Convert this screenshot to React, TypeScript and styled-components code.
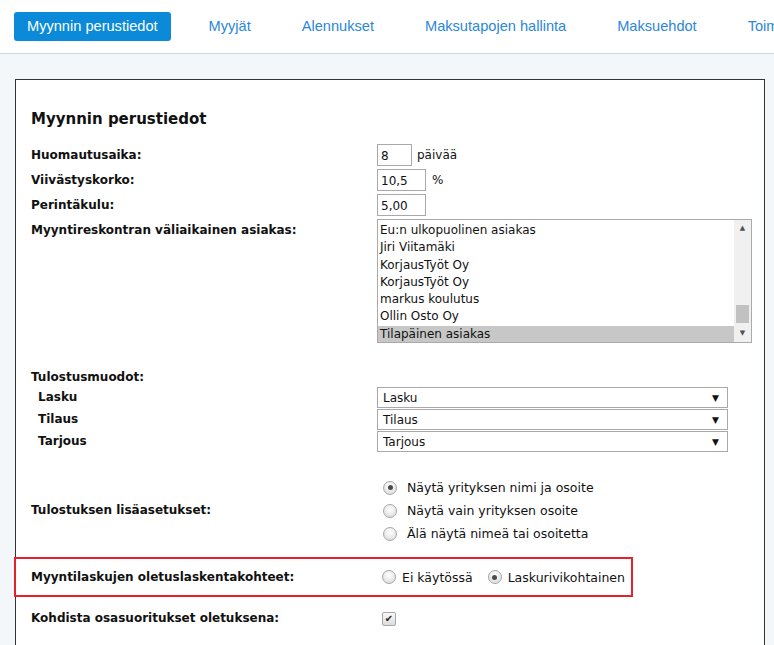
import styled, { createGlobalStyle } from 'styled-components'

const GlobalStyle = createGlobalStyle`
  html, body {
    margin: 0;
    padding: 0;
    background: #f3f7fa;
    overflow: hidden;
  }
  body {
    font-family: "DejaVu Sans", Verdana, sans-serif;
    color: #111;
  }
`

const tabs = [
  'Myynnin perustiedot',
  'Myyjät',
  'Alennukset',
  'Maksutapojen hallinta',
  'Maksuehdot',
  'Toimitustavat',
]

const customers = [
  'Eu:n ulkopuolinen asiakas',
  'Jiri Viitamäki',
  'KorjausTyöt Oy',
  'KorjausTyöt Oy',
  'markus koulutus',
  'Ollin Osto Oy',
  'Tilapäinen asiakas',
]

export default function App() {
  return (
    <>
      <GlobalStyle />
      <TabBar>
        {tabs.map((t, i) => (
          <Tab key={t} active={i === 0}>
            {t}
          </Tab>
        ))}
      </TabBar>

      <Panel>
        <Heading>Myynnin perustiedot</Heading>

        <Rows>
          <Row>
            <Label>Huomautusaika:</Label>
            <Field>
              <TextInput $w={35} readOnly value="8" />
              <Unit>päivää</Unit>
            </Field>
          </Row>
          <Row>
            <Label>Viivästyskorko:</Label>
            <Field>
              <TextInput $w={49} readOnly value="10,5" />
              <Unit $gap={6}>%</Unit>
            </Field>
          </Row>
          <Row>
            <Label>Perintäkulu:</Label>
            <Field>
              <TextInput $w={49} readOnly value="5,00" />
            </Field>
          </Row>
          <Row $top>
            <Label $pad={3}>Myyntireskontran väliaikainen asiakas:</Label>
            <ListBox>
              <Options>
                {customers.map((c, i) => (
                  <Option key={i} selected={i === customers.length - 1}>
                    {c}
                  </Option>
                ))}
              </Options>
              <ScrollBar>
                <Arrow>▲</Arrow>
                <Track>
                  <Thumb />
                </Track>
                <Arrow>▼</Arrow>
              </ScrollBar>
            </ListBox>
          </Row>
        </Rows>

        <SubTitle>Tulostusmuodot:</SubTitle>
        <SelectRows>
          {['Lasku', 'Tilaus', 'Tarjous'].map((s) => (
            <Row key={s}>
              <Label $indent>{s}</Label>
              <Select>
                <span>{s}</span>
                <Caret>▼</Caret>
              </Select>
            </Row>
          ))}
        </SelectRows>

        <RadioSection>
          <Label $pad={0}>Tulostuksen lisäasetukset:</Label>
          <RadioStack>
            <RadioLine>
              <Radio checked />
              <span>Näytä yrityksen nimi ja osoite</span>
            </RadioLine>
            <RadioLine>
              <Radio />
              <span>Näytä vain yrityksen osoite</span>
            </RadioLine>
            <RadioLine>
              <Radio />
              <span>Älä näytä nimeä tai osoitetta</span>
            </RadioLine>
          </RadioStack>
        </RadioSection>

        <Highlighted>
          <Label>Myyntilaskujen oletuslaskentakohteet:</Label>
          <InlineRadios>
            <RadioLine $gap={6}>
              <Radio />
              <span>Ei käytössä</span>
            </RadioLine>
            <RadioLine $gap={6}>
              <Radio checked />
              <span>Laskurivikohtainen</span>
            </RadioLine>
          </InlineRadios>
        </Highlighted>

        <CheckRow>
          <Label>Kohdista osasuoritukset oletuksena:</Label>
          <Check>✔</Check>
        </CheckRow>
      </Panel>
    </>
  )
}

const TabBar = styled.div`
  display: flex;
  align-items: center;
  gap: 25px;
  height: 53px;
  padding-left: 14px;
  background: #fff;
  border-bottom: 1px solid #c8d9e7;
  white-space: nowrap;
  overflow: hidden;
`

const Tab = styled.div<{ active?: boolean }>`
  height: 29px;
  line-height: 29px;
  padding: 0 13px;
  border-radius: 3px;
  font-family: "Liberation Sans", Arial, sans-serif;
  font-size: 14.6px;
  color: ${(p) => (p.active ? '#fff' : '#2b87d9')};
  background: ${(p) => (p.active ? '#0a8ad9' : 'transparent')};
`

const Panel = styled.div`
  margin: 25px 0 0 15px;
  width: 718px;
  min-height: 700px;
  padding: 29px 15px 0 15px;
  background: #fff;
  border: 1px solid #333;
`

const Heading = styled.h2`
  margin: 0 0 15px;
  font-size: 15px;
  line-height: 20px;
  font-weight: bold;
`

const Rows = styled.div`
  display: flex;
  flex-direction: column;
  gap: 3px;
`

const Row = styled.div<{ $top?: boolean }>`
  display: grid;
  grid-template-columns: 346px 1fr;
  align-items: ${(p) => (p.$top ? 'start' : 'center')};
`

const Label = styled.div<{ $indent?: boolean; $pad?: number }>`
  font-size: 12px;
  font-weight: bold;
  line-height: 17px;
  padding-left: ${(p) => (p.$indent ? 7 : 0)}px;
  padding-top: ${(p) => p.$pad ?? 0}px;
`

const Field = styled.div`
  display: flex;
  align-items: center;
`

const TextInput = styled.input<{ $w: number }>`
  box-sizing: border-box;
  width: ${(p) => p.$w}px;
  height: 22px;
  padding: 1px 3px 0;
  border: 1px solid #a9a9a9;
  font-family: "DejaVu Sans", Verdana, sans-serif;
  font-size: 12px;
  color: #111;
  outline: none;
`

const Unit = styled.span<{ $gap?: number }>`
  margin-left: ${(p) => p.$gap ?? 5}px;
  font-size: 12px;
`

const ListBox = styled.div`
  box-sizing: border-box;
  display: flex;
  width: 375px;
  height: 124px;
  border: 1px solid #aaa;
`

const Options = styled.div`
  flex: 1;
  padding-top: 2px;
  overflow: hidden;
`

const Option = styled.div<{ selected?: boolean }>`
  height: 17.3px;
  line-height: 17px;
  padding-left: 2px;
  font-size: 12px;
  color: #111;
  background: ${(p) => (p.selected ? '#c7c7c7' : 'transparent')};
  white-space: nowrap;
`

const ScrollBar = styled.div`
  width: 17px;
  display: flex;
  flex-direction: column;
  background: #f0f0f0;
`

const Arrow = styled.div`
  height: 17px;
  line-height: 17px;
  text-align: center;
  font-size: 7px;
  color: #505050;
  font-family: "DejaVu Sans", sans-serif;
`

const Track = styled.div`
  flex: 1;
  display: flex;
  flex-direction: column;
  justify-content: flex-end;
  padding: 0 2px;
`

const Thumb = styled.div`
  height: 18px;
  margin-bottom: 2px;
  background: #c1c1c1;
`

const SubTitle = styled(Label)`
  margin-top: 26px;
`

const SelectRows = styled.div`
  display: flex;
  flex-direction: column;
  gap: 1px;
  margin-top: 1px;
`

const Select = styled.div`
  box-sizing: border-box;
  width: 351px;
  height: 21px;
  display: flex;
  align-items: center;
  justify-content: space-between;
  padding: 0 8px 0 5px;
  border: 1px solid #a9a9a9;
  font-size: 12px;
  color: #111;
`

const Caret = styled.span`
  font-size: 9px;
  color: #111;
`

const RadioSection = styled(Row)`
  margin-top: 27px;
`

const RadioStack = styled.div`
  display: flex;
  flex-direction: column;
  gap: 6px;
  padding-left: 6px;
`

const RadioLine = styled.label<{ $gap?: number }>`
  display: flex;
  align-items: center;
  gap: ${(p) => p.$gap ?? 10}px;
  height: 17px;
  font-size: 12.5px;
  color: #111;
`

const Radio = styled.span<{ checked?: boolean }>`
  box-sizing: border-box;
  position: relative;
  width: 14px;
  height: 14px;
  border-radius: 50%;
  border: 1px solid #a7a7a7;
  background: radial-gradient(circle at 50% 35%, #ffffff 0%, #eeeeee 45%, #d3d3d3 100%);
  flex-shrink: 0;

  &::after {
    content: '';
    display: ${(p) => (p.checked ? 'block' : 'none')};
    position: absolute;
    left: 3.5px;
    top: 3.5px;
    width: 5px;
    height: 5px;
    border-radius: 50%;
    background: #4a4a4a;
  }
`

const Highlighted = styled(Row)`
  box-sizing: border-box;
  width: 619px;
  height: 40px;
  margin: 15px 0 0 -17px;
  padding-left: 15px;
  grid-template-columns: 345px 1fr;
  border: 2px solid #e8202a;
`

const InlineRadios = styled.div`
  display: flex;
  align-items: center;
  gap: 15px;
  padding-left: 6px;
`

const CheckRow = styled(Row)`
  margin-top: 13px;
`

const Check = styled.span`
  box-sizing: border-box;
  margin-left: 5px;
  width: 14px;
  height: 14px;
  border: 1px solid #a7a7a7;
  border-radius: 2px;
  background: linear-gradient(#fafafa, #dcdcdc);
  font-size: 10px;
  line-height: 12px;
  text-align: center;
  color: #222;
`
